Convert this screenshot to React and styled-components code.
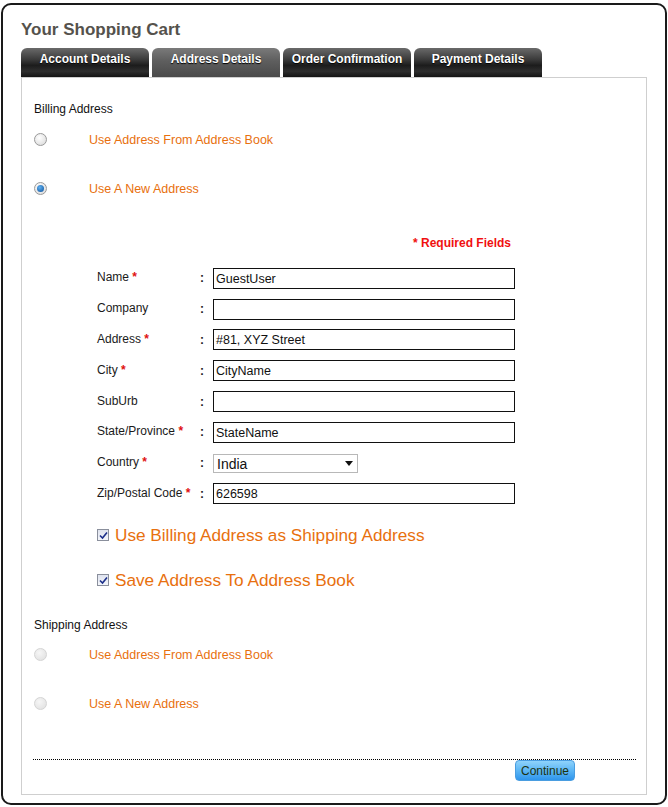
import React from "react";
import styled, { createGlobalStyle, css } from "styled-components";

const Global = createGlobalStyle`
  html, body { margin: 0; padding: 0; background: #fff; }
  body { font-family: "Liberation Sans", Arial, sans-serif; }
`;

const Frame = styled.div`
  box-sizing: border-box;
  width: 666px;
  height: 802px;
  margin: 3px 0 0 1px;
  border: 2px solid #1a1a1a;
  border-radius: 10px;
  padding: 0 0 0 18px;
`;

const Title = styled.h1`
  margin: 14px 0 0 0;
  height: 22px;
  line-height: 22px;
  font-size: 17px;
  font-weight: bold;
  color: #55524c;
`;

const Tabs = styled.div`
  display: flex;
  gap: 3px;
  margin-top: 7px;
  height: 29px;
`;

const Tab = styled.div`
  width: 128px;
  height: 29px;
  box-sizing: border-box;
  border-radius: 6px 6px 0 0;
  color: #fff;
  font-size: 12px;
  font-weight: bold;
  display: flex;
  justify-content: center;
  padding-top: 4px;
  text-shadow: 0 1px 1px #000;
  background: ${(p) =>
    p.$active
      ? "linear-gradient(#7a7a7a 0%, #5e5e5e 45%, #4a4a4a 100%)"
      : "linear-gradient(#6a6a6a 0%, #3a3a3a 40%, #1c1c1c 60%, #2e2e2e 80%, #141414 100%)"};
`;

const Panel = styled.div`
  box-sizing: border-box;
  width: 626px;
  height: 718px;
  border: 1px solid #cfcfcf;
  padding: 21px 10px 0 11px;
  display: flex;
  flex-direction: column;
`;

const SectionTitle = styled.div`
  height: 20px;
  line-height: 20px;
  font-size: 12px;
  color: #111;
  margin-top: ${(p) => p.$mt || 0}px;
  margin-left: 1px;
`;

const OptionRow = styled.div`
  height: 24px;
  display: flex;
  align-items: center;
  margin-top: ${(p) => p.$mt || 0}px;
  margin-left: 1px;
`;

const Radio = styled.span`
  box-sizing: border-box;
  width: 13px;
  height: 13px;
  border-radius: 50%;
  border: 1px solid ${(p) => (p.$disabled ? "#d4d4d4" : "#9a9a9a")};
  background: ${(p) =>
    p.$disabled
      ? "radial-gradient(circle at 40% 35%, #f6f6f6, #dedede)"
      : "radial-gradient(circle at 40% 35%, #ffffff, #d6d6d6)"};
  display: flex;
  align-items: center;
  justify-content: center;
  margin-top: -2px;
  ${(p) =>
    p.$checked &&
    css`
      &::after {
        content: "";
        width: 7px;
        height: 7px;
        border-radius: 50%;
        background: radial-gradient(circle at 40% 35%, #5fb0f0, #0b4f9a);
      }
    `}
`;

const OptionLabel = styled.span`
  margin-left: 42px;
  font-size: 12.5px;
  color: #e8700e;
`;

const Required = styled.div`
  height: 20px;
  line-height: 20px;
  margin-top: 32px;
  padding-left: 380px;
  font-size: 12px;
  font-weight: bold;
  color: #f01010;
`;

const Form = styled.div`
  margin-top: 10px;
  padding-left: 64px;
  display: grid;
  grid-template-columns: 103px 13px 302px;
  grid-auto-rows: 30.8px;
  align-items: center;
`;

const Label = styled.div`
  font-size: 12px;
  color: #1a1a1a;
  margin-top: -2px;
`;

const Star = styled.span`
  color: #e01010;
  font-weight: bold;
`;

const Colon = styled.div`
  font-size: 12px;
  font-weight: bold;
  color: #222;
`;

const Input = styled.div`
  box-sizing: border-box;
  width: 302px;
  height: 21px;
  border: 1px solid #111;
  font-family: "Liberation Sans", Arial, sans-serif;
  font-size: 12.5px;
  color: #111;
  padding: 2px 0 0 2px;
  line-height: 16px;
`;

const Select = styled.div`
  box-sizing: border-box;
  width: 145px;
  height: 19px;
  border: 1px solid #b8b8b8;
  display: flex;
  align-items: center;
  justify-content: space-between;
  padding: 0 4px 0 3px;
  font-size: 14px;
  color: #111;
  margin-top: 1px;
`;

const CheckRow = styled.div`
  height: 24px;
  display: flex;
  align-items: center;
  margin-top: ${(p) => p.$mt || 0}px;
  padding-left: 64px;
`;

const CheckBox = styled.span`
  box-sizing: border-box;
  width: 12px;
  height: 12px;
  border: 1px solid #8a8f9c;
  background: linear-gradient(#dfe3ee, #f4f6fb);
  display: flex;
  align-items: center;
  justify-content: center;
`;

const CheckText = styled.span`
  margin-left: 6px;
  font-size: 17.2px;
  color: #e8700e;
`;

const Footer = styled.div`
  margin-top: 43px;
  border-top: 1px dotted #000;
  display: flex;
  justify-content: flex-end;
  padding-right: 61px;
`;

const Button = styled.button`
  box-sizing: border-box;
  width: 60px;
  height: 21px;
  border: 1px solid #4a9de0;
  border-radius: 4px;
  background: linear-gradient(#8fd3fb 0%, #5cb6f5 50%, #2f95ec 100%);
  font-family: "Liberation Sans", Arial, sans-serif;
  font-size: 12px;
  color: #1d3310;
  padding: 0;
  cursor: pointer;
`;

const fields = [
  { label: "Name", req: true, value: "GuestUser" },
  { label: "Company", req: false, value: "" },
  { label: "Address", req: true, value: "#81, XYZ Street" },
  { label: "City", req: true, value: "CityName" },
  { label: "SubUrb", req: false, value: "" },
  { label: "State/Province", req: true, value: "StateName" },
  { label: "Country", req: true, select: "India" },
  { label: "Zip/Postal Code", req: true, value: "626598" },
];

const Check = () => (
  <CheckBox>
    <svg width="9" height="9" viewBox="0 0 9 9">
      <path d="M1 4.5 L3.5 7 L8 1.5" stroke="#1c2f8a" strokeWidth="1.6" fill="none" />
    </svg>
  </CheckBox>
);

export default function App() {
  return (
    <>
      <Global />
      <Frame>
        <Title>Your Shopping Cart</Title>
        <Tabs>
          <Tab>Account Details</Tab>
          <Tab $active>Address Details</Tab>
          <Tab>Order Confirmation</Tab>
          <Tab>Payment Details</Tab>
        </Tabs>
        <Panel>
          <SectionTitle>Billing Address</SectionTitle>
          <OptionRow $mt={9}>
            <Radio />
            <OptionLabel>Use Address From Address Book</OptionLabel>
          </OptionRow>
          <OptionRow $mt={25}>
            <Radio $checked />
            <OptionLabel>Use A New Address</OptionLabel>
          </OptionRow>
          <Required>* Required Fields</Required>
          <Form>
            {fields.map((f) => (
              <React.Fragment key={f.label}>
                <Label>
                  {f.label}
                  {f.req && <Star> *</Star>}
                </Label>
                <Colon>:</Colon>
                {f.select ? (
                  <Select>
                    <span>{f.select}</span>
                    <svg width="8" height="5" viewBox="0 0 8 5">
                      <path d="M0 0 H8 L4 5 Z" fill="#111" />
                    </svg>
                  </Select>
                ) : (
                  <Input>{f.value}</Input>
                )}
              </React.Fragment>
            ))}
          </Form>
          <CheckRow $mt={14}>
            <Check />
            <CheckText>Use Billing Address as Shipping Address</CheckText>
          </CheckRow>
          <CheckRow $mt={21}>
            <Check />
            <CheckText>Save Address To Address Book</CheckText>
          </CheckRow>
          <SectionTitle $mt={23}>Shipping Address</SectionTitle>
          <OptionRow $mt={8}>
            <Radio $disabled />
            <OptionLabel>Use Address From Address Book</OptionLabel>
          </OptionRow>
          <OptionRow $mt={25}>
            <Radio $disabled />
            <OptionLabel>Use A New Address</OptionLabel>
          </OptionRow>
          <Footer>
            <Button>Continue</Button>
          </Footer>
        </Panel>
      </Frame>
    </>
  );
}
